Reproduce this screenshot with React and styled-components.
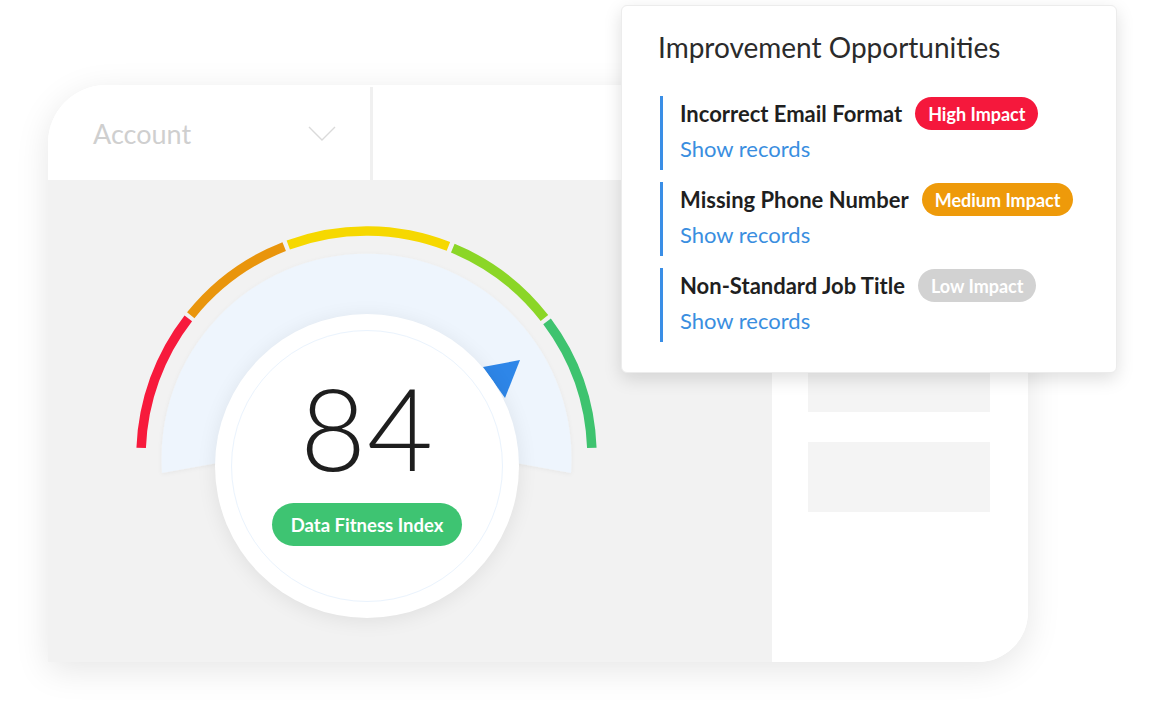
import React from "react";
import styled, { createGlobalStyle } from "styled-components";

const GlobalStyle = createGlobalStyle`
  * { box-sizing: border-box; }
  body {
    margin: 0;
    background: #ffffff;
    font-family: "Lato", "Open Sans", sans-serif;
  }
`;

const Page = styled.div`
  position: relative;
  width: 1154px;
  height: 710px;
  overflow: hidden;
  padding: 85px 0 0 48px;
  background: #ffffff;
`;

const Card = styled.div`
  width: 980px;
  height: 577px;
  display: grid;
  grid-template-rows: 95px 1fr;
  border-radius: 58px 0 50px 0;
  overflow: hidden;
  background: #ffffff;
  box-shadow: 0 8px 34px rgba(0, 0, 0, 0.1);
`;

const Header = styled.div`
  display: flex;
  background: #ffffff;
`;

const SelectCell = styled.div`
  width: 325px;
  display: flex;
  align-items: center;
  justify-content: space-between;
  padding: 0 33px 0 45px;
  border-right: 3px solid #f0f0f0;
  margin-top: 2px;
`;

const SelectLabel = styled.span`
  font-size: 27px;
  color: #cfcfcf;
  font-weight: 400;
`;

const Body = styled.div`
  display: flex;
`;

const GrayArea = styled.div`
  flex: 1;
  background: #f2f2f2;
  padding: 40px 0 0 84px;
`;

const SidePanel = styled.div`
  width: 256px;
  background: #ffffff;
  padding: 62px 0 0 36px;
  display: flex;
  flex-direction: column;
  gap: 30px;
`;

const Placeholder = styled.div`
  width: 182px;
  height: 70px;
  background: #f4f4f4;
`;

const Gauge = styled.div`
  position: relative;
  width: 472px;
  height: 400px;
`;

const GaugeSvg = styled.svg`
  display: block;
`;

const ScoreCircle = styled.div`
  position: absolute;
  left: 83px;
  top: 94px;
  width: 304px;
  height: 304px;
  border-radius: 50%;
  background: #ffffff;
  box-shadow: 0 3px 20px rgba(0, 0, 0, 0.08);
  display: flex;
  flex-direction: column;
  align-items: center;
  padding-top: 56px;
`;

const InnerRing = styled.div`
  position: absolute;
  inset: 16px;
  border-radius: 50%;
  border: 1px solid #eaf3fd;
  pointer-events: none;
`;

const Score = styled.div`
  font-size: 114px;
  line-height: 114px;
  font-weight: 300;
  color: #1e1e1e;
  letter-spacing: 1px;
`;

const IndexBadge = styled.div`
  margin-top: 19px;
  width: 190px;
  height: 43px;
  border-radius: 22px;
  background: #3ec472;
  color: #ffffff;
  font-size: 18.5px;
  font-weight: 700;
  display: flex;
  align-items: center;
  justify-content: center;
`;

const Popup = styled.div`
  position: absolute;
  left: 621px;
  top: 5px;
  width: 496px;
  height: 368px;
  background: #ffffff;
  border: 1px solid #ececec;
  border-radius: 6px;
  box-shadow: 0 6px 18px rgba(0, 0, 0, 0.13);
  padding: 25px 0 0 36px;
`;

const PopupTitle = styled.h2`
  margin: 0 0 33px;
  font-size: 28px;
  line-height: 32px;
  font-weight: 400;
  color: #2b2b2b;
`;

const IssueList = styled.div`
  display: flex;
  flex-direction: column;
  gap: 12px;
  padding-left: 2px;
`;

const Issue = styled.div`
  border-left: 3px solid #3a8ee6;
  padding: 0 0 3px 17px;
  display: flex;
  flex-direction: column;
`;

const IssueHead = styled.div`
  height: 35px;
  display: flex;
  align-items: center;
  gap: 13px;
`;

const IssueName = styled.span`
  font-size: 22px;
  font-weight: 700;
  color: #1f1f1f;
`;

const ImpactBadge = styled.span`
  height: 33px;
  padding: 0 13px;
  border-radius: 17px;
  display: inline-flex;
  align-items: center;
  font-size: 18px;
  font-weight: 700;
  color: #ffffff;
  background: ${(p) => p.color};
`;

const RecordsLink = styled.a`
  font-size: 22px;
  line-height: 36px;
  color: #3a8ee0;
  text-decoration: none;
  cursor: pointer;
`;

const CX = 366.5;
const CY = 456.5;
const R = 225.5;

const pt = (deg, r = R) => {
  const a = (deg * Math.PI) / 180;
  return [CX + r * Math.cos(a), CY - r * Math.sin(a)];
};

const arcPath = (from, to) => {
  const [x1, y1] = pt(from);
  const [x2, y2] = pt(to);
  return `M${x1.toFixed(2)} ${y1.toFixed(2)} A${R} ${R} 0 0 1 ${x2.toFixed(2)} ${y2.toFixed(2)}`;
};

const segments = [
  { from: 177.8, to: 142.2, color: "#f71a3c" },
  { from: 141.2, to: 111.4, color: "#e9950c" },
  { from: 110.3, to: 68.7, color: "#f6d800" },
  { from: 67.5, to: 37.9, color: "#8bd627" },
  { from: 36.8, to: 2.2, color: "#3ec36f" },
];

const issues = [
  { name: "Incorrect Email Format", impact: "High Impact", color: "#f5183c" },
  { name: "Missing Phone Number", impact: "Medium Impact", color: "#ee9a0a" },
  { name: "Non-Standard Job Title", impact: "Low Impact", color: "#d2d2d2" },
];

const Chevron = () => (
  <svg width="30" height="18" viewBox="0 0 30 18">
    <path d="M2 2 L15 15 L28 2" fill="none" stroke="#dadada" strokeWidth="1.4" />
  </svg>
);

const App = () => {
  return (
    <>
      <GlobalStyle />
      <Page>
        <Card>
          <Header>
            <SelectCell>
              <SelectLabel>Account</SelectLabel>
              <Chevron />
            </SelectCell>
          </Header>
          <Body>
            <GrayArea>
              <Gauge>
                <GaugeSvg width="472" height="400" viewBox="132 220 472 400">
                  <defs>
                    <filter id="fanShadow" x="-10%" y="-10%" width="120%" height="130%">
                      <feDropShadow dx="0" dy="1" stdDeviation="2" floodColor="#000" floodOpacity="0.05" />
                    </filter>
                  </defs>
                  <path
                    d="M162 473 A205 205 0 1 1 571 473 L366 436 Z"
                    fill="#eef5fd"
                    filter="url(#fanShadow)"
                  />
                  {segments.map((s) => (
                    <path
                      key={s.color}
                      d={arcPath(s.from, s.to)}
                      fill="none"
                      stroke={s.color}
                      strokeWidth="9.5"
                    />
                  ))}
                  <path d="M483 367 L520 360 L505 398 Z" fill="#2e86e8" />
                </GaugeSvg>
                <ScoreCircle>
                  <InnerRing />
                  <Score>84</Score>
                  <IndexBadge>Data Fitness Index</IndexBadge>
                </ScoreCircle>
              </Gauge>
            </GrayArea>
            <SidePanel>
              <Placeholder />
              <Placeholder />
              <Placeholder />
            </SidePanel>
          </Body>
        </Card>

        <Popup>
          <PopupTitle>Improvement Opportunities</PopupTitle>
          <IssueList>
            {issues.map((it) => (
              <Issue key={it.name}>
                <IssueHead>
                  <IssueName>{it.name}</IssueName>
                  <ImpactBadge color={it.color}>{it.impact}</ImpactBadge>
                </IssueHead>
                <RecordsLink>Show records</RecordsLink>
              </Issue>
            ))}
          </IssueList>
        </Popup>
      </Page>
    </>
  );
};

export default App;
